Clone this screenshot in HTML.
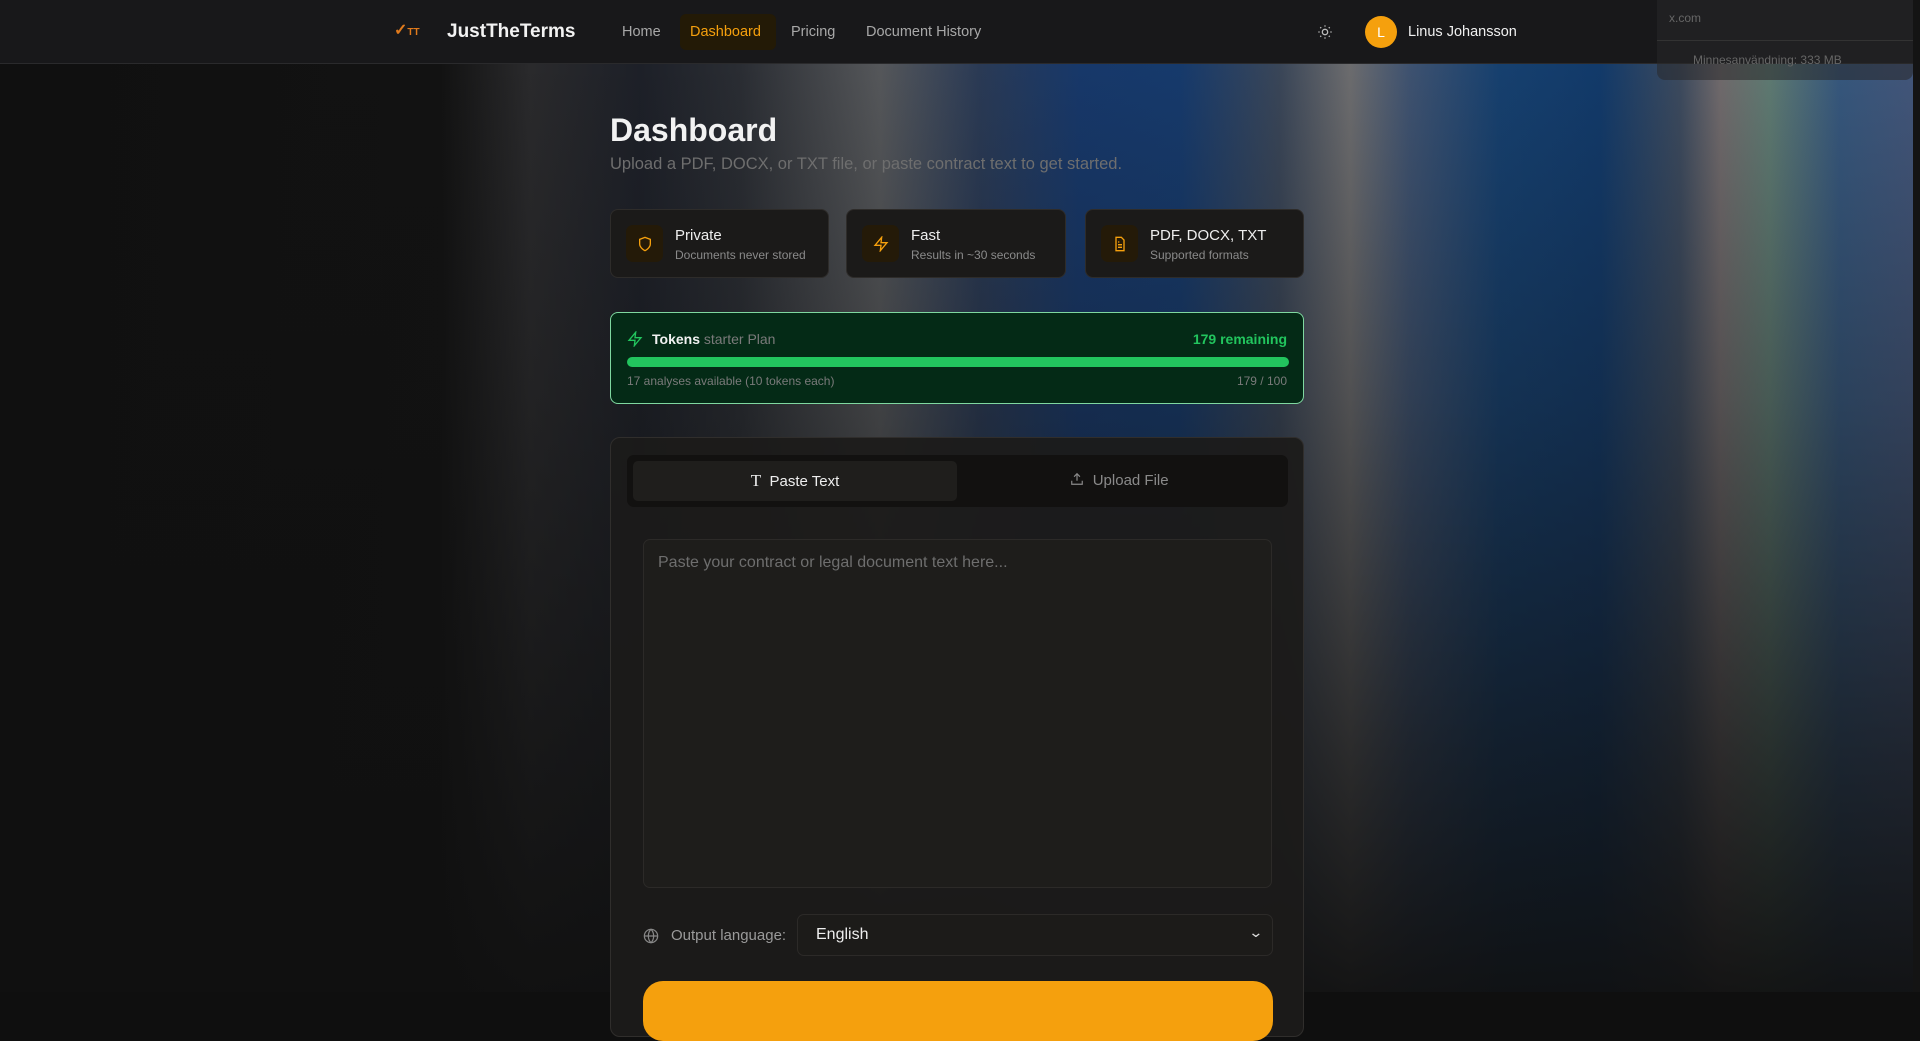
<!DOCTYPE html>
<html><head><meta charset="utf-8"><style>
*{box-sizing:border-box;margin:0;padding:0}
body{width:1920px;height:992px;overflow:hidden;font-family:"Liberation Sans",sans-serif;background:#0f0f0f;position:relative;color:#eee}
.bg{position:absolute;inset:0;background:linear-gradient(90deg,#101010 0,#121212 440px,#2a2a2c 530px,#1d2028 640px,#2a2d33 740px,#55575a 880px,#2a3a55 980px,#17386a 1080px,#163a6c 1180px,#3a4658 1280px,#6c6c6e 1350px,#3e5270 1410px,#16406f 1500px,#123a6a 1600px,#3c4a5e 1680px,#706a6c 1720px,#5e7a72 1770px,#36577d 1840px,#42567a 1910px)}
.fade{position:absolute;inset:0;background:linear-gradient(180deg,rgba(16,16,16,0) 60px,rgba(16,16,16,.3) 400px,rgba(16,16,16,.7) 750px,rgba(16,16,16,.95) 992px)}
.nav{position:absolute;left:0;top:0;width:1920px;height:64px;background:#18181a;border-bottom:1px solid #2a2a2c}
.nav .t{position:absolute;top:0;line-height:64px;font-size:14.5px;color:#a8a8a8}
.overlay{position:absolute;left:1657px;top:0;width:256px;height:80px;background:rgba(40,40,42,.55);border-radius:0 0 8px 8px;font-size:12px;color:#666}
.scroll{position:absolute;right:0;top:0;width:7px;height:992px;background:#141414}
.main{position:absolute;left:610px;width:694px}
.card{position:absolute;top:209px;height:69px;background:#1b1a19;border:1px solid #2e2c2a;border-radius:8px}
.card .ic{position:absolute;left:15px;top:15px;width:37px;height:37px;background:#241a08;border-radius:7px;display:flex;align-items:center;justify-content:center}
.card .h{position:absolute;left:64px;top:17px;font-size:15px;color:#eee}
.card .s{position:absolute;left:64px;top:38px;font-size:12px;color:#8a8a8a}
</style></head><body>
<div class="bg"></div><div class="fade"></div>
<div class="nav">
 <div style="position:absolute;left:394px;top:20px;color:#e07a1c;font-size:16px;font-weight:bold">✓<span style="font-size:10px">TT</span></div>
 <div class="t" style="left:447px;color:#f2f2f2;font-size:19px;font-weight:bold">JustTheTerms</div>
 <div class="t" style="left:622px">Home</div>
 <div style="position:absolute;left:680px;top:14px;width:96px;height:36px;background:#231a06;border-radius:6px"></div>
 <div class="t" style="left:690px;color:#f5a00d">Dashboard</div>
 <div class="t" style="left:791px">Pricing</div>
 <div class="t" style="left:866px">Document History</div>
 <svg style="position:absolute;left:1317px;top:24px" width="16" height="16" viewBox="0 0 24 24" fill="none" stroke="#bbb" stroke-width="2"><circle cx="12" cy="12" r="4"/><path d="M12 2v2M12 20v2M4.9 4.9l1.4 1.4M17.7 17.7l1.4 1.4M2 12h2M20 12h2M4.9 19.1l1.4-1.4M17.7 6.3l1.4-1.4"/></svg>
 <div style="position:absolute;left:1365px;top:16px;width:32px;height:32px;border-radius:50%;background:#f5a00d;color:#fff;font-size:14px;text-align:center;line-height:32px">L</div>
 <div class="t" style="left:1408px;color:#f0f0f0">Linus Johansson</div>
</div>
<div class="overlay"><div style="position:absolute;left:12px;top:11px">x.com</div><div style="position:absolute;left:0;top:40px;width:256px;border-top:1px solid #333"></div><div style="position:absolute;left:36px;top:53px">Minnesanvändning: 333 MB</div></div>
<div class="scroll"></div>

<div class="main" style="top:0;height:992px">
 <div style="position:absolute;top:112px;font-size:32px;font-weight:bold;color:#f2f2f2">Dashboard</div>
 <div style="position:absolute;top:155px;font-size:16.5px;color:#6e6e6e">Upload a PDF, DOCX, or TXT file, or paste contract text to get started.</div>

 <div class="card" style="left:0;width:219px"><div class="ic"><svg width="16" height="16" viewBox="0 0 24 24" fill="none" stroke="#f5a00d" stroke-width="2"><path d="M12 22s8-4 8-10V5l-8-3-8 3v7c0 6 8 10 8 10z"/></svg></div><div class="h">Private</div><div class="s">Documents never stored</div></div>
 <div class="card" style="left:236px;width:220px"><div class="ic"><svg width="16" height="16" viewBox="0 0 24 24" fill="none" stroke="#f5a00d" stroke-width="2"><path d="M13 2L3 14h9l-1 8 10-12h-9l1-8z"/></svg></div><div class="h">Fast</div><div class="s">Results in ~30 seconds</div></div>
 <div class="card" style="left:475px;width:219px"><div class="ic"><svg width="16" height="16" viewBox="0 0 24 24" fill="none" stroke="#f5a00d" stroke-width="2"><path d="M14 2H6v20h12V6z"/><path d="M9 13h6M9 17h6M9 9h2"/></svg></div><div class="h">PDF, DOCX, TXT</div><div class="s">Supported formats</div></div>

 <div style="position:absolute;top:312px;left:0;width:694px;height:92px;background:#042a16;border:1px solid #7fd8a0;border-radius:8px">
  <svg style="position:absolute;left:16px;top:18px" width="16" height="16" viewBox="0 0 24 24" fill="none" stroke="#22c55e" stroke-width="2"><path d="M13 2L3 14h9l-1 8 10-12h-9l1-8z"/></svg>
  <div style="position:absolute;left:41px;top:18px;font-size:14px"><b style="color:#f2f2f2">Tokens</b> <span style="color:#7a7a7a">starter Plan</span></div>
  <div style="position:absolute;right:16px;top:18px;font-size:14px;font-weight:bold;color:#22c55e">179 remaining</div>
  <div style="position:absolute;left:16px;top:44px;width:662px;height:10px;border-radius:5px;background:#22c55e"></div>
  <div style="position:absolute;left:16px;top:61px;font-size:12px;color:#7a7a7a">17 analyses available (10 tokens each)</div>
  <div style="position:absolute;right:16px;top:61px;font-size:12px;color:#7a7a7a">179 / 100</div>
 </div>

 <div style="position:absolute;top:437px;left:0;width:694px;height:600px;background:rgba(28,27,26,.93);border:1px solid #302e2c;border-radius:10px">
  <div style="position:absolute;left:16px;top:17px;width:661px;height:52px;background:#121110;border-radius:7px">
   <div style="position:absolute;left:6px;top:6px;width:324px;height:40px;background:#1f1e1c;border-radius:5px;text-align:center;line-height:40px;font-size:15px;color:#eee"><span style="font-family:'Liberation Serif',serif;font-size:17px">T</span>&nbsp; Paste Text</div>
   <div style="position:absolute;left:330px;top:6px;width:325px;height:40px;text-align:center;line-height:40px;font-size:15px;color:#8a8a8a"><svg width="14" height="14" viewBox="0 0 24 24" fill="none" stroke="#8a8a8a" stroke-width="2" style="vertical-align:-1px"><path d="M12 15V3M7 8l5-5 5 5M3 15v6h18v-6"/></svg>&nbsp; Upload File</div>
  </div>
  <div style="position:absolute;left:32px;top:101px;width:629px;height:349px;background:#1e1d1b;border:1px solid #2c2a28;border-radius:7px">
   <div style="position:absolute;left:14px;top:14px;font-size:16px;color:#6e6e6e">Paste your contract or legal document text here...</div>
  </div>
  <svg style="position:absolute;left:32px;top:490px" width="16" height="16" viewBox="0 0 24 24" fill="none" stroke="#888" stroke-width="1.8"><circle cx="12" cy="12" r="10"/><path d="M2 12h20M12 2c3 3 4 7 4 10s-1 7-4 10c-3-3-4-7-4-10s1-7 4-10z"/></svg>
  <div style="position:absolute;left:60px;top:489px;font-size:15px;color:#9a9a9a">Output language:</div>
  <div style="position:absolute;left:186px;top:476px;width:476px;height:42px;background:#1c1b19;border:1px solid #2c2a28;border-radius:7px">
   <div style="position:absolute;left:18px;top:11px;font-size:16px;color:#eee">English</div>
   <div style="position:absolute;right:10px;top:9px;font-size:14px;color:#ddd;transform:scaleX(1.3)">⌄</div>
  </div>
  <div style="position:absolute;left:32px;top:543px;width:630px;height:60px;background:#f5a00d;border-radius:20px"></div>
 </div>
</div>
</body></html>
